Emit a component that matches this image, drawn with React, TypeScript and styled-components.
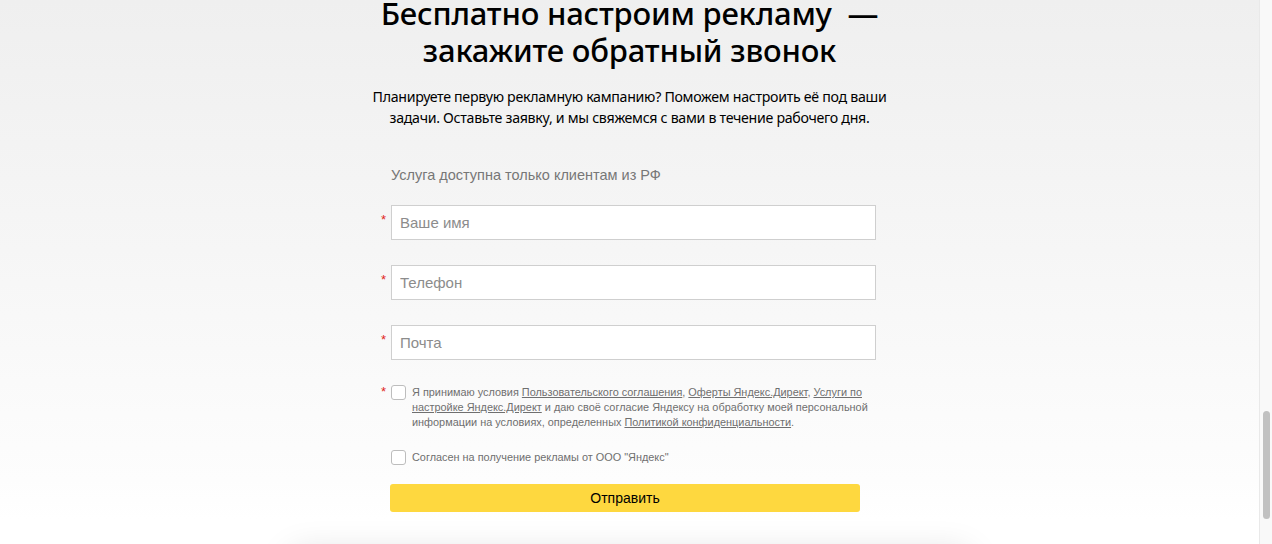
import React from "react";
import styled, { createGlobalStyle } from "styled-components";

const Global = createGlobalStyle`
  html, body { margin: 0; padding: 0; height: 100%; overflow: hidden; }
  body { font-family: "Liberation Sans", Arial, sans-serif; }
  #root { height: 100%; }
`;

const Screen = styled.div`
  display: flex;
  width: 1272px;
  height: 544px;
  overflow: hidden;
`;

const Page = styled.main`
  flex: 1;
  display: flex;
  flex-direction: column;
  align-items: center;
  background: linear-gradient(to bottom, #efefef 0px, #f6f6f6 250px, #fdfdfd 480px, #ffffff 520px);
  overflow: hidden;
`;

const Title = styled.h1`
  margin: -5px 0 0;
  font-family: "Noto Sans", "Open Sans", sans-serif;
  font-weight: 500;
  font-size: 31px;
  line-height: 37px;
  text-align: center;
  color: #000;
  letter-spacing: -0.2px;
`;

const Lead = styled.p`
  margin: 17px 0 0;
  font-family: "Noto Sans", sans-serif;
  font-size: 14.2px;
  line-height: 21px;
  text-align: center;
  color: #000;
  white-space: nowrap;
  letter-spacing: -0.3px;
`;

const Form = styled.form`
  margin: 37px 0 0;
  width: 497px;
  display: flex;
  flex-direction: column;
`;

const Note = styled.div`
  padding-left: 10px;
  font-size: 14.5px;
  line-height: 20px;
  color: #777;
  margin-bottom: 20px;
`;

const Row = styled.div<{ $gap?: number }>`
  display: flex;
  align-items: flex-start;
  margin-bottom: ${(p) => p.$gap ?? 25}px;
`;

const Star = styled.span<{ $visible?: boolean; $top?: number }>`
  width: 10px;
  flex: none;
  color: #e0261b;
  font-size: 13px;
  line-height: 13px;
  padding-top: ${(p) => p.$top ?? 8}px;
  visibility: ${(p) => (p.$visible ? "visible" : "hidden")};
`;

const Input = styled.input`
  box-sizing: border-box;
  width: 485px;
  height: 35px;
  border: 1px solid #cfcfcf;
  background: #fff;
  padding: 0 8px;
  font-family: "Liberation Sans", Arial, sans-serif;
  font-size: 15px;
  color: #000;
  outline: none;
  &::placeholder { color: #8c8c8c; }
`;

const Check = styled.span`
  box-sizing: border-box;
  flex: none;
  width: 15px;
  height: 15px;
  border: 1px solid #bdbdbd;
  border-radius: 3px;
  background: #fff;
  margin-right: 6px;
`;

const Consent = styled.div`
  font-size: 10.9px;
  line-height: 15px;
  color: #6f6f6f;
  white-space: nowrap;
`;

const Link = styled.a`
  color: #6f6f6f;
  text-decoration: underline;
  text-underline-offset: 1px;
`;

const Submit = styled.button`
  margin-left: 9px;
  width: 470px;
  height: 28px;
  border: none;
  border-radius: 3px;
  background: #fed83f;
  font-family: "Liberation Sans", Arial, sans-serif;
  font-size: 14px;
  color: #000;
  cursor: pointer;
`;

const Card = styled.div`
  margin-top: 40px;
  width: 680px;
  height: 80px;
  flex: none;
  background: #fff;
  box-shadow: 0 0 34px rgba(0, 0, 0, 0.13);
  border-radius: 10px;
`;

const Track = styled.div`
  width: 13px;
  flex: none;
  background: #f9f9f9;
  border-left: 1px solid #e9e9e9;
  padding-top: 411px;
  box-sizing: border-box;
  display: flex;
  justify-content: center;
`;

const Thumb = styled.div`
  width: 7px;
  height: 108px;
  border-radius: 4px;
  background: #c1c1c1;
`;

export default function App() {
  return (
    <>
      <Global />
      <Screen>
        <Page>
          <Title>
            Бесплатно настроим рекламу&nbsp; —<br />
            закажите обратный звонок
          </Title>
          <Lead>
            Планируете первую рекламную кампанию? Поможем настроить её под ваши
            <br />
            задачи. Оставьте заявку, и мы свяжемся с вами в течение рабочего дня.
          </Lead>
          <Form onSubmit={(e) => e.preventDefault()}>
            <Note>Услуга доступна только клиентам из РФ</Note>
            <Row>
              <Star $visible>*</Star>
              <Input placeholder="Ваше имя" />
            </Row>
            <Row>
              <Star $visible>*</Star>
              <Input placeholder="Телефон" />
            </Row>
            <Row>
              <Star $visible>*</Star>
              <Input placeholder="Почта" />
            </Row>
            <Row $gap={20}>
              <Star $visible $top={0}>*</Star>
              <Check />
              <Consent>
                Я принимаю условия <Link>Пользовательского соглашения</Link>,{" "}
                <Link>Оферты Яндекс.Директ</Link>, <Link>Услуги по</Link>
                <br />
                <Link>настройке Яндекс.Директ</Link> и даю своё согласие Яндексу на обработку моей
                персональной
                <br />
                информации на условиях, определенных <Link>Политикой конфиденциальности</Link>.
              </Consent>
            </Row>
            <Row $gap={19}>
              <Star $top={0}>*</Star>
              <Check />
              <Consent>Согласен на получение рекламы от ООО "Яндекс"</Consent>
            </Row>
            <Submit type="submit">Отправить</Submit>
          </Form>
          <Card />
        </Page>
        <Track>
          <Thumb />
        </Track>
      </Screen>
    </>
  );
}
